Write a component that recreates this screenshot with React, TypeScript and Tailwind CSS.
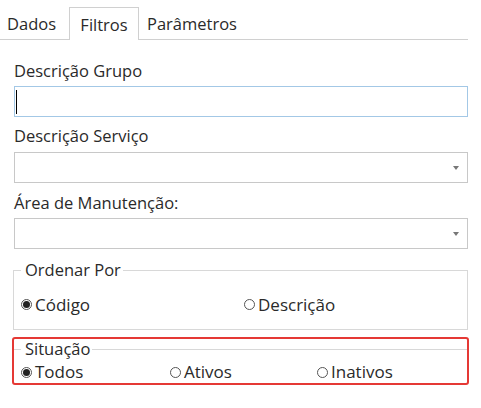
import React from "react";

const font = { fontFamily: '"Segoe UI", "Open Sans", sans-serif' };

const Radio = ({ checked }: { checked?: boolean }) => (
	<span className="inline-flex h-[11px] w-[11px] items-center justify-center rounded-full border border-[#555] bg-white mr-[3px]">
		{checked && <span className="h-[7px] w-[7px] rounded-full bg-[#222]" />}
	</span>
);

const Select = () => (
	<div className="relative h-[31px] w-[454px] border border-[#c8c8c8] bg-white">
		<span className="absolute right-[8px] top-[13px] h-0 w-0 border-l-[3px] border-r-[3px] border-t-[4px] border-l-transparent border-r-transparent border-t-[#777]" />
	</div>
);

export default function App() {
	return (
		<div className="h-[408px] w-[481px] bg-white text-[16.5px] text-[#2a2a2a]" style={font}>
			<div className="flex h-[40px] w-[468px] items-end border-b border-[#d0d0d0]">
				<div className="h-[33px] w-[69px] pl-[7px] leading-[35px]">Dados</div>
				<div className="mb-[-1px] h-[33px] w-[70px] border border-b-0 border-[#d0d0d0] bg-white text-center leading-[34px]">Filtros</div>
				<div className="h-[33px] pl-[8px] leading-[35px]">Parâmetros</div>
			</div>

			<div className="pl-[14px]">
				<div className="mt-[18px] h-[28px] leading-[26px]">Descrição Grupo</div>
				<div className="flex h-[31px] w-[454px] items-center border border-[#a3c8e6] bg-white px-[1px]">
					<span className="h-[24px] w-[1px] bg-black" />
				</div>

				<div className="mt-[6px] h-[29px] leading-[26px]">Descrição Serviço</div>
				<Select />

				<div className="mt-[7px] h-[28px] leading-[26px]">Área de Manutenção:</div>
				<Select />
			</div>

			<fieldset className="ml-[13px] mt-[10px] h-[71px] w-[455px] border border-[#d8d8d8] px-[7px]">
				<legend className="pl-[4px] pr-[2px] leading-[22px]">Ordenar Por</legend>
				<div className="mt-[11px] flex items-center text-[17px]">
					<div className="flex w-[223px] items-center">
						<Radio checked />
						<span>Código</span>
					</div>
					<div className="flex items-center">
						<Radio />
						<span>Descrição</span>
					</div>
				</div>
			</fieldset>

			<div className="ml-[12px] mt-[7px] h-[48px] w-[457px] rounded-[3px] border-2 border-[#e53935]">
				<fieldset className="border-t border-[#d8d8d8] px-[7px]">
					<legend className="pl-[4px] pr-[2px] leading-[20px]">Situação</legend>
					<div className="mt-[2px] flex items-center text-[17px] leading-[22px]">
						<div className="flex w-[149px] items-center">
							<Radio checked />
							<span>Todos</span>
						</div>
						<div className="flex w-[147px] items-center">
							<Radio />
							<span>Ativos</span>
						</div>
						<div className="flex items-center">
							<Radio />
							<span>Inativos</span>
						</div>
					</div>
				</fieldset>
			</div>
		</div>
	);
}
